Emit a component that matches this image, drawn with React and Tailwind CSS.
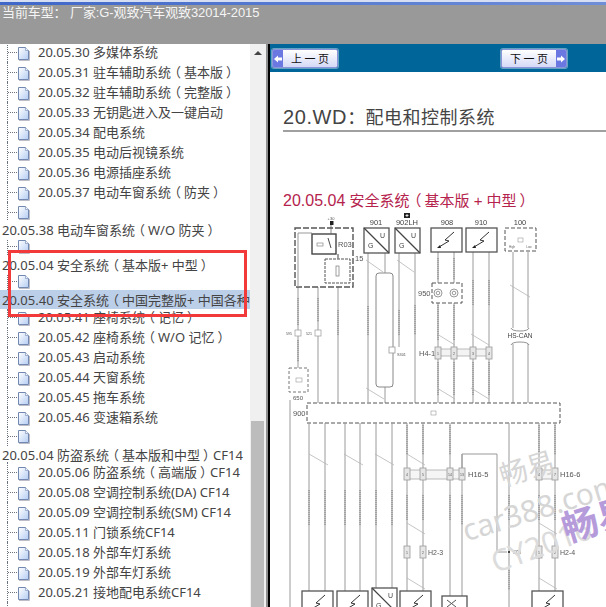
import React from "react";

const CJK = '"Noto Sans CJK SC",sans-serif';
const LIB = '"Liberation Sans","Noto Sans CJK SC",sans-serif';

function DocIcon() {
  return (
    <svg width="13" height="14" viewBox="0 0 13 14" className="shrink-0">
      <defs>
        <linearGradient id="docg" x1="0" y1="0" x2="1" y2="1">
          <stop offset="0" stopColor="#ffffff" />
          <stop offset="1" stopColor="#b5cdf3" />
        </linearGradient>
      </defs>
      <path d="M1.5 .5H8.5L11.5 3.5V12.5H1.5Z" fill="url(#docg)" stroke="#7288b0" />
      <path d="M8.5 .5V3.5H11.5" fill="#eef3fc" stroke="#7288b0" strokeWidth=".6" />
      <path d="M2 13.5H12.5V4" fill="none" stroke="#bdbdc8" />
    </svg>
  );
}

function Parens({ text }) {
  return text.split(/([（）])/).map((p, i) =>
    p === "（" ? (
      <span key={i} className="inline-block -translate-x-[3px]">（</span>
    ) : p === "）" ? (
      <span key={i} className="inline-block translate-x-[3px]">）</span>
    ) : (
      p
    )
  );
}

function Leaf({ label, h = "h-5" }) {
  return (
    <div className={`flex items-center ${h} ml-[7px] border-l border-dotted border-gray-500`}>
      <span className="w-[9px] border-t border-dotted border-gray-500" />
      <span className="mt-[4px] flex"><DocIcon /></span>
      {label && (
        <span className="ml-[8px] whitespace-nowrap text-[13px] leading-[16px] text-[#444]">
          <Parens text={label} />
        </span>
      )}
    </div>
  );
}

function EmptyLeaf({ h, pt = "pt-0", my = "mt-[6px]" }) {
  return (
    <div className={`flex items-start ${h} ${pt} ml-[7px] border-l border-dotted border-gray-500`}>
      <span className={`w-[9px] border-t border-dotted border-gray-500 ${my}`} />
      <DocIcon />
    </div>
  );
}

function Root({ label, h = "h-5", active }) {
  return (
    <div className={`flex items-center ${h} pl-[2px] overflow-hidden ${active ? "bg-[#bccfe9]" : ""}`}>
      <span className="whitespace-nowrap text-[13px] leading-[16px] text-[#444]">
        <Parens text={label} />
      </span>
    </div>
  );
}

function Btn({ label, dir }) {
  const arrow = (
    <span className="w-[10px] self-stretch bg-[#6c78e2] flex items-center justify-center">
      <svg width="8" height="8" viewBox="0 0 8 8">
        <path d={dir === "l" ? "M0 4L4 .5V2.5H8V5.5H4V7.5Z" : "M8 4L4 .5V2.5H0V5.5H4V7.5Z"} fill="#fff" />
      </svg>
    </span>
  );
  return (
    <div className="w-[66px] h-[19px] flex items-stretch rounded-[2px] border border-[#8a94d8] ring-1 ring-white/40 bg-gradient-to-b from-white to-[#d5d9f6] overflow-hidden">
      {dir === "l" && arrow}
      <span className="flex-1 text-center text-[11px] leading-[17px] text-[#111] whitespace-pre" style={{ fontFamily: CJK }}>
        {label}
      </span>
      {dir === "r" && arrow}
    </div>
  );
}

function Diagram() {
  const ox = 270, oy = 205;
  const L = (x1, y1, x2, y2, w = 1, c = "#9a9a9a") => (
    <line x1={x1 - ox} y1={y1 - oy} x2={x2 - ox} y2={y2 - oy} stroke={c} strokeWidth={w} />
  );
  const W = (x, y1, y2, labels = []) => (
    <g>
      {L(x, y1, x, y2)}
      {labels.map(([a, b], i) => (
        <line key={i} x1={x - ox} y1={a - oy} x2={x - ox} y2={b - oy} stroke="#a2a2a2" strokeWidth="2" strokeDasharray="1.2 .8" />
      ))}
    </g>
  );
  const R = (x, y, w, h, c = "#555", sw = 1.3, d, fill = "#fff") => (
    <rect x={x - ox} y={y - oy} width={w} height={h} fill={fill} stroke={c} strokeWidth={sw} strokeDasharray={d} />
  );
  const T = (x, y, t, s = 8, c = "#555", anchor = "start") => (
    <text x={x - ox} y={y - oy} fontSize={s} fill={c} textAnchor={anchor} fontFamily="Liberation Sans, sans-serif">{t}</text>
  );
  const Slash = (x, y, dx = 17, dy = 11) => L(x, y, x + dx, y + dy, 0.8, "#b5b5b5");
  const BoltBox = (x, y, w = 31) => (
    <g>
      {R(x, y, w, 24, "#555", 1.3)}
      <path
        d={`M${x - ox + 23} ${y - oy + 4}L${x - ox + 14} ${y - oy + 12}L${x - ox + 18} ${y - oy + 13}L${x - ox + 8} ${y - oy + 19}`}
        fill="none"
        stroke="#333"
        strokeWidth="1"
      />
      <path d={`M${x - ox + 6} ${y - oy + 20}l3 -3l1 3z`} fill="#222" />
    </g>
  );
  const Conn = (x, y, t, h = 12) => (
    <g>
      {R(x - 3, y, 6, h, "#999", 0.8, undefined, "#e6e6e6")}
      {T(x, y + h / 2 + 1.5, t, 3.5, "#555", "middle")}
    </g>
  );
  const SplitBox = (x, y) => (
    <g>
      {R(x, y, 25, 25, "#555", 1.3)}
      {L(x, y, x + 25, y + 25, 1.2, "#444")}
      {T(x + 4, y + 20, "G", 7, "#444")}
      {T(x + 16, y + 10, "U", 7, "#444")}
    </g>
  );
  return (
    <svg width="336" height="402" viewBox="0 0 336 402" className="blur-[0.45px]">
      {W(298, 287, 368, [[298, 325], [340, 362]])}
      {W(318, 287, 403, [[298, 322]])}
      {W(338, 287, 403, [[310, 335]])}
      {W(368, 253, 402, [[306, 335]])}
      {L(385, 253, 385, 273)}
      {L(385, 387, 385, 403)}
      {W(399, 253, 347, [[310, 335]])}
      {L(392, 353, 392, 387)}
      {W(415, 253, 403, [[305, 335]])}
      {W(438, 252, 403, [[258, 280], [305, 340], [362, 395]])}
      {W(454, 252, 403, [[258, 280], [305, 340], [362, 395]])}
      {W(473, 252, 403, [[280, 305], [362, 395]])}
      {W(489, 252, 403, [[280, 305], [362, 395]])}
      {L(513, 252, 513, 328)}{L(528, 252, 528, 328)}
      {L(513, 344, 513, 403)}{L(528, 344, 528, 403)}
      {L(290, 400, 290, 607)}
      {Slash(366, 260, 17, 12)}{Slash(397, 260, 17, 12)}
      {Slash(510, 285, 20, 12)}
      {Slash(437, 334, 18, 11)}{Slash(471, 334, 18, 11)}
      {Slash(366, 388, 18, 11)}{Slash(437, 388, 18, 11)}{Slash(471, 388, 18, 11)}

      {R(295, 228, 58, 59, "#555", 1.4, "6 2")}
      <path d={`M${298 - ox} ${287 - oy}V${233 - oy}H${312 - ox}`} fill="none" stroke="#999" />
      {R(312, 234, 24, 20, "#444", 1.4)}
      {L(328, 238, 331, 248, 0.9, "#333")}
      {R(317, 243, 6, 3, "#888", 0.7)}
      {T(338, 247, "R03", 7.5)}
      {T(355, 261, "15", 7.5)}
      {R(325, 259, 25, 24, "#555", 1, "3 1")}
      {R(336, 266, 3, 10, "#777", 0.7)}
      {L(338, 254, 338, 259, 1.6, "#888")}
      <rect x={330 - ox} y={221 - oy} width="3.5" height="4" fill="#222" />
      {L(331, 225, 331, 234, 0.8, "#666")}
      {T(331, 220, "+30", 4, "#555", "middle")}

      {R(295, 330, 6, 6, "#999", 0.7)}{R(315, 330, 6, 6, "#999", 0.7)}
      {T(286, 335, "595", 3.6)}{T(306, 335, "521", 3.6)}
      {R(289, 368, 19, 24, "#777", 1, "3 2")}
      {R(296, 378, 6, 4, "#999", 0.6)}
      {T(298, 400, "650", 6, "#555", "middle")}

      {T(376, 225, "901", 7.5, "#444", "middle")}
      {T(407, 225, "902LH", 7.5, "#444", "middle")}
      {T(447, 225, "908", 7.5, "#444", "middle")}
      {T(481, 225, "910", 7.5, "#444", "middle")}
      {T(520, 225, "100", 7.5, "#444", "middle")}
      <rect x={404 - ox} y={213 - oy} width="6" height="5" fill="#222" />
      <path d={`M${407 - ox} ${214 - oy}v3M${405.5 - ox} ${215.5 - oy}h3`} stroke="#fff" strokeWidth=".8" />
      {SplitBox(364, 228)}{SplitBox(395, 228)}
      {BoltBox(431, 228)}{BoltBox(466, 228)}
      {R(505, 228, 31, 23, "#555", 1, "4 2")}
      {R(518, 238, 5, 4, "#999", 0.6)}
      {T(512, 248, "High", 3, "#666", "middle")}{T(529, 248, "Low", 3, "#666", "middle")}
      <rect x={376 - ox} y={273 - oy} width="17" height="114" rx="3" fill="#fff" stroke="#888" />

      {R(432, 283, 30, 20, "#555", 1, "4 2")}
      {[438, 454].map((x) => (
        <g key={x}>
          <circle cx={x - ox} cy={293 - oy} r="4" fill="#fff" stroke="#999" />
          <circle cx={x - ox} cy={293 - oy} r="1.8" fill="none" stroke="#999" />
        </g>
      ))}
      {T(418, 296, "950", 7.5)}

      {R(389, 347, 6, 6, "#999", 0.8)}
      {T(397, 356, "S301", 3.8)}
      {T(419, 356, "H4-1", 7.5)}
      {R(438, 349, 51, 7, "#aaa", 0.8, undefined, "#f3f3f3")}
      {Conn(438, 347, "1")}{Conn(454, 347, "2")}{Conn(473, 347, "3")}{Conn(489, 347, "4")}
      {T(520, 338, "HS-CAN", 6.5, "#444", "middle")}
      <path d={`M${511 - ox} ${328 - oy}q1 3 9 3q8 0 9 -3M${511 - ox} ${345 - oy}q1 -3 9 -3q8 0 9 3`} fill="none" stroke="#777" strokeWidth=".8" />

      {R(307, 403, 253, 20, "#555", 1, "4 2")}
      {T(293, 416, "900", 7.5)}
      {R(431, 411, 5, 4, "#999", 0.6)}
      {W(309, 423, 591, [[490, 525]])}
      {W(325, 423, 591, [[490, 525]])}
      {W(345, 423, 591, [[490, 525]])}
      {W(360, 423, 591, [[490, 525]])}
      {W(376, 423, 588, [[490, 525]])}
      {W(392, 423, 600, [[490, 525]])}
      {W(407, 423, 591, [[425, 455], [495, 520]])}
      {W(423, 423, 591, [[425, 455], [495, 520]])}
      {W(450, 423, 596, [[425, 455], [495, 520]])}
      {W(462, 454, 596, [[495, 525]])}
      {W(509, 423, 607, [[495, 520], [570, 590]])}
      {W(539, 423, 591, [[425, 455], [495, 520]])}
      {W(555, 423, 591, [[425, 455], [495, 520]])}
      {Slash(309, 454, 19, 11)}{Slash(344, 454, 19, 11)}{Slash(375, 454, 19, 11)}
      {Slash(407, 454, 18, 11)}{Slash(407, 523, 18, 11)}{Slash(407, 578, 18, 11)}
      {Slash(539, 523, 18, 11)}{Slash(539, 578, 18, 11)}

      {R(407, 470, 55, 9, "#aaa", 0.8, undefined, "#f5f5f5")}
      {Conn(407, 468, "4")}{Conn(423, 468, "5")}{Conn(450, 468, "14")}{Conn(462, 468, "13")}
      {T(468, 477, "H16-5", 7.5)}
      <path d={`M${462 - ox} ${468 - oy}V${454 - oy}H${497 - ox}V${552 - oy}H${507 - ox}`} fill="none" stroke="#999" />
      <rect x={508 - ox} y={551 - oy} width="2" height="2" fill="#444" />
      {T(513, 554, "S06", 4.5)}
      {R(539, 470, 16, 9, "#aaa", 0.8, undefined, "#f5f5f5")}
      {Conn(539, 468, "4")}{Conn(555, 468, "7")}
      {T(560, 477, "H16-6", 7.5)}

      {Conn(407, 546, "1")}{Conn(423, 546, "2")}{T(428, 555, "H2-3", 7)}
      {Conn(539, 546, "1")}{Conn(555, 546, "2")}{T(560, 555, "H2-4", 7)}

      {BoltBox(302, 591)}{BoltBox(337, 591)}{SplitBox(372, 588)}{BoltBox(400, 591)}
      {R(442, 596, 25, 20, "#555", 1.3)}
      <path d={`M${447 - ox} ${600 - oy}l9 7M${456 - ox} ${600 - oy}l-9 7`} stroke="#555" />
      {BoltBox(532, 591)}
    </svg>
  );
}

export default function App() {
  return (
    <div className="w-[606px] h-[607px] overflow-hidden bg-white flex flex-col relative" style={{ fontFamily: '"Noto Sans","Noto Sans CJK SC",sans-serif' }}>
      <div className="relative z-10 shrink-0">
        <div className="h-[2px] bg-[#d5def2]" />
        <div className="h-[3px] bg-gradient-to-r from-[#3f67c8] to-[#6f8ed8]" />
        <div className="h-[39px] bg-[#999999] pl-[2px] text-[#f4f4f4] text-[13px] leading-[16px] whitespace-pre tracking-[-0.1px]" style={{ fontFamily: LIB }}>
          当前车型： 厂家:G-观致汽车观致32014-2015
        </div>
      </div>
      <div className="flex flex-1 min-h-0">
        <div className="w-[250px] shrink-0 overflow-hidden -mt-[2px]">
          <Leaf label="20.05.30 多媒体系统" />
          <Leaf label="20.05.31 驻车辅助系统（基本版）" />
          <Leaf label="20.05.32 驻车辅助系统（完整版）" />
          <Leaf label="20.05.33 无钥匙进入及一键启动" />
          <Leaf label="20.05.34 配电系统" />
          <Leaf label="20.05.35 电动后视镜系统" />
          <Leaf label="20.05.36 电源插座系统" />
          <Leaf label="20.05.37 电动车窗系统（防夹）" />
          <EmptyLeaf h="h-[18px]" pt="pt-[4px]" />
          <Root label="20.05.38 电动车窗系统（W/O 防夹）" />
          <EmptyLeaf h="h-[15px]" />
          <Root label="20.05.04 安全系统（基本版+ 中型）" />
          <EmptyLeaf h="h-[15px]" />
          <Root label="20.05.40 安全系统（中国完整版+ 中国各种" h="h-[19px]" active />
          <Leaf label="20.05.41 座椅系统（记忆）" h="h-[16px] mb-[2px]" />
          <Leaf label="20.05.42 座椅系统（W/O 记忆）" />
          <Leaf label="20.05.43 启动系统" />
          <Leaf label="20.05.44 天窗系统" />
          <Leaf label="20.05.45 拖车系统" />
          <Leaf label="20.05.46 变速箱系统" />
          <EmptyLeaf h="h-[19px]" pt="pt-[3px]" />
          <Root label="20.05.04 防盗系统（基本版和中型）CF14" h="h-[18px] -mb-[2px]" />
          <Leaf label="20.05.06 防盗系统（高端版）CF14" />
          <Leaf label="20.05.08 空调控制系统(DA) CF14" />
          <Leaf label="20.05.09 空调控制系统(SM) CF14" />
          <Leaf label="20.05.11 门锁系统CF14" />
          <Leaf label="20.05.18 外部车灯系统" />
          <Leaf label="20.05.19 外部车灯系统" />
          <Leaf label="20.05.21 接地配电系统CF14" />
          <Leaf label="" />
        </div>
        <div className="w-[16px] shrink-0 bg-[#f0f0f0] flex flex-col items-center pl-px pr-[2px] pt-[7px]">
          <span className="w-0 h-0 border-x-[4px] border-x-transparent border-b-[4px] border-b-[#444]" />
          <div className="mt-auto w-[13px] h-[186px] bg-[#bcbcbc]" />
        </div>
        <div className="w-[2px] shrink-0 bg-[#8f8f8f]" />
        <div className="w-[2px] shrink-0 bg-black" />
        <div className="flex-1 min-w-0 flex flex-col overflow-hidden">
          <div className="h-[28px] shrink-0 bg-[#00669a] flex items-start pt-[5px] pl-[2px] gap-[163px]">
            <Btn label={"上 一 页"} dir="l" />
            <Btn label={"下 一 页"} dir="r" />
          </div>
          <div className="pl-[13px] pt-[34px]" style={{ fontFamily: LIB }}>
            <div className="text-[#444] text-[18px] leading-[23px] border-b-2 border-[#a0a0a0] whitespace-nowrap tracking-[0.5px]">
              <span className="text-[20px] tracking-[0.6px]">20.WD</span>：配电和控制系统
            </div>
            <div className="mt-[59px] text-[#b5234d] text-[15px] leading-[20px] whitespace-nowrap">
              <span className="text-[16px]">20.05.04</span> <Parens text="安全系统（基本版 + 中型）" />
            </div>
          </div>
        </div>
      </div>
      <div className="absolute left-[270px] top-[205px] pointer-events-none"><Diagram /></div>
      <div className="absolute left-[8px] top-[250px] w-[239px] h-[67px] border-[3px] border-[#f23a3a] pointer-events-none" />
      <div className="absolute left-[500px] top-[462px] origin-left text-[#d6d6d6] text-[28px] leading-[28px] -rotate-[17deg] whitespace-nowrap">畅易</div>
      <div className="absolute left-[463px] top-[516px] origin-left text-[#d6d6d6] text-[30px] leading-[30px] -rotate-[17deg] whitespace-nowrap">car388.com</div>
      <div className="absolute left-[492px] top-[548px] origin-left text-[#dcdcdc] text-[30px] leading-[30px] -rotate-[20deg] whitespace-nowrap">CY2016</div>
      <div className="absolute left-[563px] top-[512px] origin-left text-[#b69bdb] text-[36px] leading-[36px] font-bold -rotate-[17deg] whitespace-nowrap">畅易</div>
    </div>
  );
}
